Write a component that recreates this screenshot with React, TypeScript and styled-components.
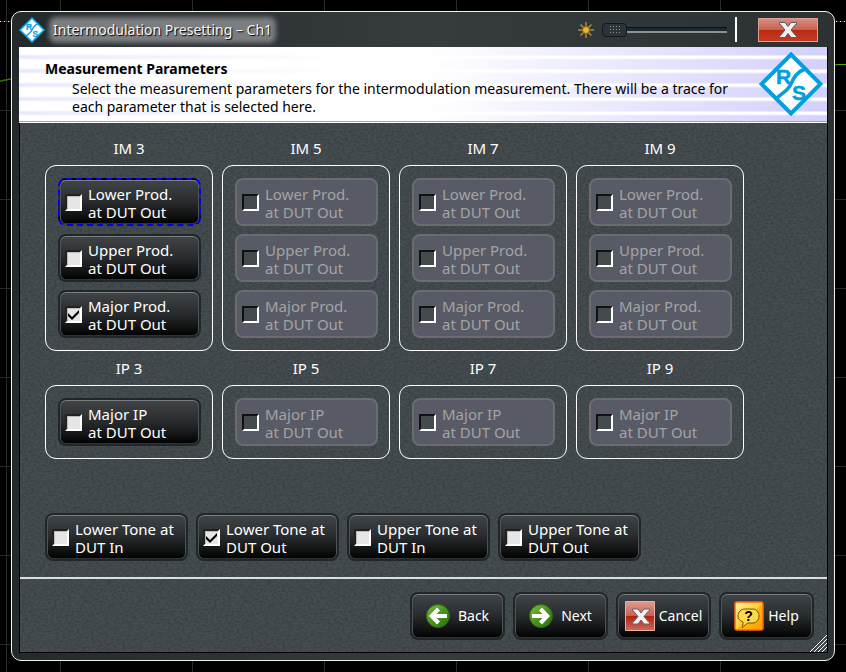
import React, { useId, useState } from "react";
import styled, { createGlobalStyle, css } from "styled-components";

const GlobalStyle = createGlobalStyle`
  *, *::before, *::after { box-sizing: border-box; }
  body {
    margin: 0;
    background: #000;
    color: #fff;
    font: 15px/18px "Noto Sans", "Open Sans", sans-serif;
  }
  button, input { font: inherit; }
`;

const grain = `url("data:image/svg+xml,%3Csvg xmlns='http://www.w3.org/2000/svg' width='160' height='160'%3E%3Cfilter id='n' x='0' y='0' width='100%25' height='100%25'%3E%3CfeTurbulence type='fractalNoise' baseFrequency='.35 .5' numOctaves='2' stitchTiles='stitch'/%3E%3CfeColorMatrix values='0 0 0 0 0 0 0 0 0 0 0 0 0 0 0 0.4 0 0 0 -0.13'/%3E%3C/filter%3E%3Crect width='160' height='160' filter='url(%23n)'/%3E%3C/svg%3E")`;

const tick = `url("data:image/svg+xml,%3Csvg xmlns='http://www.w3.org/2000/svg' viewBox='0 0 13 13'%3E%3Cpath d='M1 5l4 4 7-7v3l-7 7-4-4z' fill='%23000'/%3E%3C/svg%3E")`;

const Backdrop = styled.div`
  position: relative;
  min-height: 100vh;
  padding: 11px 11px 11px;
  background:
    repeating-linear-gradient(90deg, #fff 0 1px, transparent 1px 4px) 0 21px / 100% 1px no-repeat,
    repeating-linear-gradient(90deg, #292929 0 1px, transparent 1px 132px) 60px 0,
    repeating-linear-gradient(180deg, #292929 0 1px, transparent 1px 89px) 0 21px,
    #000;
`;

const Trace = styled.svg<{ $side: "left" | "right" }>`
  position: absolute;
  top: 56px;
  ${(p) => p.$side}: 0;
  width: 20px;
  height: 30px;
  fill: none;
  stroke: #55a800;
`;

const Dialog = styled.section`
  position: relative;
  padding: 0 6px 7px 7px;
  border: 1px solid #f2f2f2;
  border-radius: 10px;
  background: linear-gradient(90deg, #24292c, #363b3e 50%, #2c3134);
`;

const TitleBar = styled.header`
  display: flex;
  align-items: center;
  height: 35px;
  padding-right: 10px;
`;

const SmallLogo = styled.span`
  display: flex;
  width: 26px;
  height: 26px;
`;

const Title = styled.h1`
  margin: 0 auto 0 8px;
  font-size: 14px;
  font-weight: 400;
  line-height: 18px;
  color: #f4f4f4;
  text-shadow: 1px 1px 1px #000;
  white-space: nowrap;
  background: #7b7e80;
  box-shadow: 0 0 5px 4px #7b7e80;
  border-radius: 3px;
`;

const Sun = styled.svg`
  width: 16px;
  height: 16px;
  margin-right: 8px;
`;

const Brightness = styled.input`
  appearance: none;
  width: 125px;
  height: 14px;
  margin: 0 8px 0 0;
  background: linear-gradient(#0c1114 0 1px, #1c2a30 1px 4px, #8c9294 4px 6px) 0 4px / 100% 6px no-repeat;
  border-radius: 2px;

  &::-webkit-slider-thumb {
    appearance: none;
    width: 25px;
    height: 14px;
    border: 1px solid #11171a;
    border-radius: 4px;
    background:
      linear-gradient(90deg, #2c3438 0 7px, transparent 7px 17px, #2c3438 17px),
      linear-gradient(#2c3438 0 2px, transparent 2px 11px, #2c3438 11px),
      repeating-linear-gradient(90deg, transparent 0 1px, #2c3438 1px 3px) 7px 0,
      repeating-linear-gradient(#8a9194 0 1px, #2c3438 1px 3px) 0 2px;
  }
`;

const Divider = styled.span`
  width: 2px;
  height: 25px;
  margin-right: 21px;
  background: #fff;
`;

const CloseButton = styled.button`
  display: grid;
  place-items: center;
  width: 60px;
  height: 24px;
  padding: 0;
  border: 1px solid #dba196;
  background: linear-gradient(#d68d82, #c9604f 50%, #b92a13 50%, #c43a22);

  svg { width: 20px; height: 18px; }
`;

const Panel = styled.div`
  position: relative;
  border: solid #000;
  border-width: 0 1px 1px;
  background: ${grain}, #464e51;
`;

const Banner = styled.div`
  display: flex;
  justify-content: space-between;
  height: 76px;
  margin-left: -1px;
  padding: 5px 4px 0 26px;
  color: #000;
  border-bottom: 1px solid #fff;
  box-shadow: inset 0 -1px #a4a4a4;
  background:
    linear-gradient(90deg, transparent 12%, #fff 35%, transparent 60%),
    repeating-linear-gradient(rgba(255, 255, 255, 0) 0 8px, #fff 9px 11px, rgba(255, 255, 255, 0) 13px 14px) 100% 0 / 50% 100% no-repeat,
    linear-gradient(90deg, #fff 50%, #d3d0fc),
    #fff;
  position: relative;
  isolation: isolate;

  &::before {
    content: "";
    position: absolute;
    z-index: -1;
    inset: 0 60% 2px 0;
    background: repeating-linear-gradient(transparent 0 7px, #e9e9ff 9px 11px, transparent 13px 14px);
    mask: linear-gradient(90deg, #000, transparent);
  }
`;

const BannerText = styled.div`
  padding-top: 8px;

  h2 {
    margin: 0 0 2px;
    font-size: 14px;
    line-height: 18px;
    font-weight: 700;
  }

  p {
    max-width: 712px;
    margin: 0;
    padding-left: 27px;
    font-size: 14px;
    line-height: 18px;
  }
`;

const BannerLogo = styled.span`
  flex: none;
  width: 64px;
  height: 64px;
`;

const Content = styled.form`
  padding: 16px 25px 16px;
`;

const Columns = styled.div`
  display: grid;
  grid-template-columns: repeat(4, 168px);
  gap: 8px 9px;
`;

const Group = styled.fieldset`
  min-width: 0;
  margin: 0;
  padding: 0;
  border: 0;

  legend {
    width: 100%;
    padding: 0;
    text-align: center;
    line-height: 18px;
  }
`;

const Frame = styled.div`
  display: grid;
  gap: 8px;
  margin-top: 8px;
  padding: 12px;
  border: 1px solid #fff;
  border-radius: 11px;
`;

const raised = css`
  border: 2px solid #202629;
  border-radius: 8px;
  background: linear-gradient(#414548, #2b2e30 45%, #151617 75%, #000);
  box-shadow: inset 0 1px #7b7f81, inset 1px 0 #4d5153, inset -1px 0 #4d5153, inset 0 -1px #303335;
`;

const Option = styled.label<{ $disabled?: boolean; $focused?: boolean }>`
  display: flex;
  align-items: center;
  gap: 6px;
  width: 143px;
  height: 48px;
  padding: 0 0 0 5px;
  line-height: 18px;
  white-space: pre-line;
  ${raised}
  ${(p) =>
    p.$disabled &&
    css`
      color: #a3a3a3;
      border-color: #6a6c70;
      background: #585b66;
      box-shadow: none;
    `}
  ${(p) => p.$focused && css`border: 2px dashed #0000f4;`}
`;

const OptionText = styled.span`
  padding-top: 2px;
`;

const Check = styled.input`
  appearance: none;
  flex: none;
  width: 17px;
  height: 17px;
  margin: 0;
  border: 2px solid;
  border-color: #222 #fff #fff #222;
  outline: none;
  box-shadow: inset 1px 1px #bbb;
  background: #e6e6e6;

  &:checked { background: #e6e6e6 ${tick} center / 13px 13px no-repeat; }
  &:disabled { background: #434b4d; box-shadow: none; border-color: #111 #fff #fff #111; }
`;

const ToneRow = styled.div`
  display: flex;
  flex-wrap: wrap;
  gap: 8px;
  margin-top: 54px;
`;

const Footer = styled.footer`
  display: flex;
  justify-content: flex-end;
  gap: 8px;
  padding: 13px 13px 12px;
  border-top: 2px solid #dedede;
`;

const NavButton = styled.button<{ $gap: number }>`
  display: flex;
  align-items: center;
  justify-content: center;
  gap: ${(p) => p.$gap}px;
  width: 95px;
  height: 48px;
  padding: 0;
  color: #fff;
  font-size: 14px;
  ${raised}
`;

const ActionIcon = styled.svg<{ $size: number }>`
  flex: none;
  width: ${(p) => p.$size}px;
  height: ${(p) => p.$size}px;
`;

const Grip = styled.svg`
  position: absolute;
  right: 0;
  bottom: 0;
  width: 17px;
  height: 17px;
  stroke: #fff;
`;

function Logo() {
  return (
    <svg viewBox="0 0 64 64" width="100%" height="100%" aria-label="R&S">
      <path d="M32 2.500L61.500 32 32 61.500 2.500 32z" fill="#fff" stroke="#00a0df" strokeWidth="4" />
      <path d="M46 17C38 20 35 25 32 32S23 41 17 47" fill="none" stroke="#00a0df" strokeWidth="3.500" />
      <g fill="#00a0df" stroke="#00a0df" strokeWidth=".5" fontFamily="Liberation Sans, sans-serif" fontWeight="700" fontSize="21">
        <text x="17" y="32">R</text>
        <text x="33" y="48">S</text>
      </g>
    </svg>
  );
}

function Cross() {
  return (
    <svg viewBox="0 0 20 18" aria-hidden="true">
      <path
        d="M1.500 1.500h5.500l3 4 3-4h5.500v2h-1l-4.500 5.500 4.500 5.500h1v2H13l-3-4-3 4H1.500v-2h1L7 9 2.500 3.500h-1z"
        fill="#f0f0f0"
        stroke="#5b5660"
      />
    </svg>
  );
}

function ArrowIcon({ back }: { back?: boolean }) {
  const id = useId();
  return (
    <ActionIcon $size={24} viewBox="0 0 24 24" aria-hidden="true">
      <defs>
        <linearGradient id={id} x1="0" y1="0" x2="1" y2="1">
          <stop stopColor="#83bd40" />
          <stop offset=".5" stopColor="#4b9320" />
          <stop offset="1" stopColor="#286c0c" />
        </linearGradient>
      </defs>
      <circle cx="12" cy="12" r="11.500" fill={`url(#${id})`} stroke="#2b6b12" />
      <path
        d="M21 12l-8-8.500-3 3 3.500 3.500H3v4h10.500l-3.500 3.500 3 3z"
        transform={back ? "matrix(-1 0 0 1 24 0)" : undefined}
        fill="#fff"
      />
    </ActionIcon>
  );
}

function CancelIcon() {
  return (
    <ActionIcon $size={30} viewBox="0 0 30 30" aria-hidden="true">
      <defs>
        <linearGradient id="cancelFill" x1="0" y1="0" x2="0" y2="1">
          <stop stopColor="#e09c91" />
          <stop offset=".5" stopColor="#c75f50" />
          <stop offset=".5" stopColor="#b4200d" />
          <stop offset="1" stopColor="#c96b5d" />
        </linearGradient>
      </defs>
      <path d="M.5.5h29v29H.5z" fill="url(#cancelFill)" stroke="#e5b1a9" />
      <path
        d="M7.500 8h5.500l3 4 3-4h5.500v2h-1L19 15.500l4.500 5.500h1v2H19l-3-4-3 4H7.500v-2h1l4.500-5.500L8.500 10h-1z"
        fill="#f0f0f0"
        stroke="#69646b"
      />
    </ActionIcon>
  );
}

function HelpIcon() {
  return (
    <ActionIcon $size={30} viewBox="0 0 30 30" aria-hidden="true">
      <defs>
        <linearGradient id="helpFill" x1="0" y1="0" x2="1" y2="1">
          <stop stopColor="#fff3a0" />
          <stop offset=".5" stopColor="#ffcf35" />
          <stop offset=".52" stopColor="#ffb514" />
          <stop offset="1" stopColor="#ff9c00" />
        </linearGradient>
      </defs>
      <rect x="1" y="1" width="28" height="28" rx="2" fill="url(#helpFill)" stroke="#ff6614" strokeWidth="1.500" />
      <path
        d="M11 8h8c3 0 6 3 6 7s-3 7-6 7h-5c-2 1-4 3-6 5 1-2 1-4 1-6-3-1-5-3-5-6 0-4 3-7 7-7z"
        fill="#ffd84b"
        stroke="#6d5a08"
      />
      <text x="14.500" y="20" textAnchor="middle" fontFamily="Liberation Sans, sans-serif" fontWeight="700" fontSize="14" fill="#000">?</text>
    </ActionIcon>
  );
}

interface ToggleProps {
  text: string;
  checked?: boolean;
  disabled?: boolean;
  focused?: boolean;
}

function Toggle({ text, checked = false, disabled, focused }: ToggleProps) {
  const [on, setOn] = useState(checked);
  return (
    <Option $disabled={disabled} $focused={focused}>
      <Check type="checkbox" checked={on} disabled={disabled} onChange={() => setOn(!on)} />
      <OptionText>{text}</OptionText>
    </Option>
  );
}

const orders = [3, 5, 7, 9];
const products = ["Lower", "Upper", "Major"];
const tones = [
  { text: "Lower Tone at\nDUT In" },
  { text: "Lower Tone at\nDUT Out", checked: true },
  { text: "Upper Tone at\nDUT In" },
  { text: "Upper Tone at\nDUT Out" },
];

export default function App() {
  return (
    <Backdrop>
      <GlobalStyle />
      <Trace $side="left" viewBox="0 0 20 30" aria-hidden="true">
        <path d="M0 25h2l2-1h3l2-1h3l2-1 3 1 3 2" />
      </Trace>
      <Trace $side="right" viewBox="0 0 20 30" aria-hidden="true">
        <path d="M0 11h6l3-2 3-.5h8" />
      </Trace>
      <Dialog role="dialog" aria-labelledby="dialog-title">
        <TitleBar>
          <SmallLogo><Logo /></SmallLogo>
          <Title id="dialog-title">Intermodulation Presetting – Ch1</Title>
          <Sun viewBox="0 0 16 16" aria-hidden="true">
            <path d="M8 0v16M0 8h16M2.500 2.500l11 11M13.500 2.500l-11 11" stroke="#a88743" strokeWidth="1.500" />
            <circle cx="8" cy="8" r="3.500" fill="#efb32b" stroke="#80661f" />
          </Sun>
          <Brightness type="range" min="0" max="100" defaultValue="0" aria-label="Brightness" />
          <Divider />
          <CloseButton type="button" aria-label="Close"><Cross /></CloseButton>
        </TitleBar>
        <Panel>
          <Banner>
            <BannerText>
              <h2>Measurement Parameters</h2>
              <p>
                Select the measurement parameters for the intermodulation measurement. There will be a trace for
                each parameter that is selected here.
              </p>
            </BannerText>
            <BannerLogo><Logo /></BannerLogo>
          </Banner>
          <Content>
            <Columns>
              {orders.map((n) => (
                <Group key={`im${n}`}>
                  <legend>IM {n}</legend>
                  <Frame>
                    {products.map((kind) => (
                      <Toggle
                        key={kind}
                        text={`${kind} Prod.\nat DUT Out`}
                        checked={n === 3 && kind === "Major"}
                        focused={n === 3 && kind === "Lower"}
                        disabled={n !== 3}
                      />
                    ))}
                  </Frame>
                </Group>
              ))}
              {orders.map((n) => (
                <Group key={`ip${n}`}>
                  <legend>IP {n}</legend>
                  <Frame>
                    <Toggle text={"Major IP\nat DUT Out"} disabled={n !== 3} />
                  </Frame>
                </Group>
              ))}
            </Columns>
            <ToneRow>
              {tones.map((tone) => (
                <Toggle key={tone.text} {...tone} />
              ))}
            </ToneRow>
          </Content>
          <Footer>
            <NavButton type="button" $gap={8}><ArrowIcon back />Back</NavButton>
            <NavButton type="button" $gap={8}><ArrowIcon />Next</NavButton>
            <NavButton type="button" $gap={4}><CancelIcon />Cancel</NavButton>
            <NavButton type="button" $gap={4}><HelpIcon />Help</NavButton>
          </Footer>
          <Grip viewBox="0 0 17 17" aria-hidden="true">
            <path d="M0 17L17 0M4 17L17 4M8 17L17 8M12 17l5-5" />
          </Grip>
        </Panel>
      </Dialog>
    </Backdrop>
  );
}
